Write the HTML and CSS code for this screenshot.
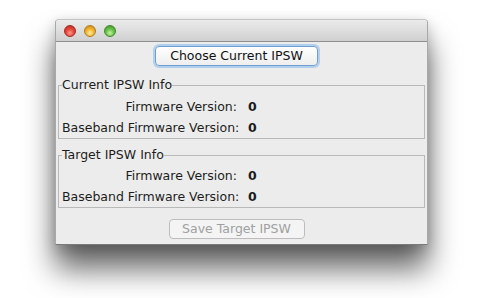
FILE: index.html
```html
<!DOCTYPE html>
<html>
<head>
<meta charset="utf-8">
<link rel="stylesheet" href="styles.css">
</head>
<body>
<div class="window">
  <div class="titlebar">
    <span class="light red"></span>
    <span class="light yellow"></span>
    <span class="light green"></span>
  </div>
  <div class="content">
    <div class="btn-row"><button class="btn primary">Choose Current IPSW</button></div>
    <fieldset class="group g1">
      <legend>Current IPSW Info</legend>
      <div class="rows">
        <span class="label">Firmware Version:</span><span class="value">0</span>
        <span class="label">Baseband Firmware Version:</span><span class="value">0</span>
      </div>
    </fieldset>
    <fieldset class="group g2">
      <legend>Target IPSW Info</legend>
      <div class="rows">
        <span class="label">Firmware Version:</span><span class="value">0</span>
        <span class="label">Baseband Firmware Version:</span><span class="value">0</span>
      </div>
    </fieldset>
    <div class="btn-row save-row"><button class="btn disabled">Save Target IPSW</button></div>
  </div>
</div>
</body>
</html>
```

FILE: styles.css
```css
html, body {
  margin: 0;
  padding: 0;
  background: #ffffff;
}
html {
  height: 100%;
}
body {
  box-sizing: border-box;
  min-height: 298px;
  height: 100%;
  padding: 19px 0 0 55px;
  font-family: "DejaVu Sans", "Liberation Sans", sans-serif;
  font-size: 12.5px;
  color: #1c1c1c;
}
.window {
  width: 373px;
  height: 226px;
  box-sizing: border-box;
  background: #ececec;
  border: 1px solid #a8a8a8;
  border-top-color: #c4c4c4;
  border-bottom-color: #7a7a7a;
  border-radius: 4px 4px 0 0;
  box-shadow: 0 24px 30px rgba(0, 0, 0, 0.6), 0 4px 14px rgba(0, 0, 0, 0.2);
  overflow: hidden;
  display: flex;
  flex-direction: column;
}
.titlebar {
  height: 21px;
  flex: none;
  background: linear-gradient(#ebebeb, #d0d0d0);
  border-bottom: 1px solid #8f8f8f;
  display: flex;
  align-items: center;
  gap: 8px;
  padding-left: 8px;
}
.light {
  width: 12px;
  height: 12px;
  border-radius: 50%;
  box-sizing: border-box;
}
.red {
  background: radial-gradient(circle at 50% 70%, #ff9a8e 0%, #e8483c 45%, #b5231c 100%);
  border: 1px solid #a42a22;
}
.yellow {
  background: radial-gradient(circle at 50% 70%, #fff0a0 0%, #f2b532 45%, #c48414 100%);
  border: 1px solid #b07d1c;
}
.green {
  background: radial-gradient(circle at 50% 70%, #c8f6a4 0%, #6ac34a 45%, #3b8d26 100%);
  border: 1px solid #3f8a2d;
}
.content {
  flex: 1;
  display: flex;
  flex-direction: column;
  padding: 0 2px;
}
.btn-row {
  display: flex;
  justify-content: center;
  padding-right: 10px;
}
.btn {
  font-family: inherit;
  font-size: 12.5px;
  height: 20px;
  padding: 0;
  border-radius: 4px;
  line-height: 16px;
}
.primary {
  margin-top: 4px;
  width: 163px;
  background: linear-gradient(#ffffff, #eeeeee);
  color: #111;
  border: 1px solid #6e9fd3;
  box-shadow: 0 0 0 2px #b3cfee;
}
.disabled {
  width: 136px;
  background: #f4f4f4;
  color: #a0a0a0;
  border: 1px solid #bdbdbd;
}
.group {
  margin: 0;
  padding: 0 0 0 3px;
  border: 1px solid #b9b9b9;
  min-width: 0;
}
.group legend {
  padding: 0;
  height: 14px;
  line-height: 14px;
  color: #1c1c1c;
}
.g1 {
  margin-top: 12px;
}
.g2 {
  margin-top: 9px;
}
.rows {
  display: grid;
  grid-template-columns: 175px auto;
  column-gap: 11px;
  grid-auto-rows: 21px;
  align-items: center;
  margin-top: 4px;
}
.g2 .rows {
  margin-top: 3px;
}
.label {
  text-align: right;
  white-space: nowrap;
}
.value {
  font-weight: bold;
}
.save-row {
  margin-top: 11px;
}
```
